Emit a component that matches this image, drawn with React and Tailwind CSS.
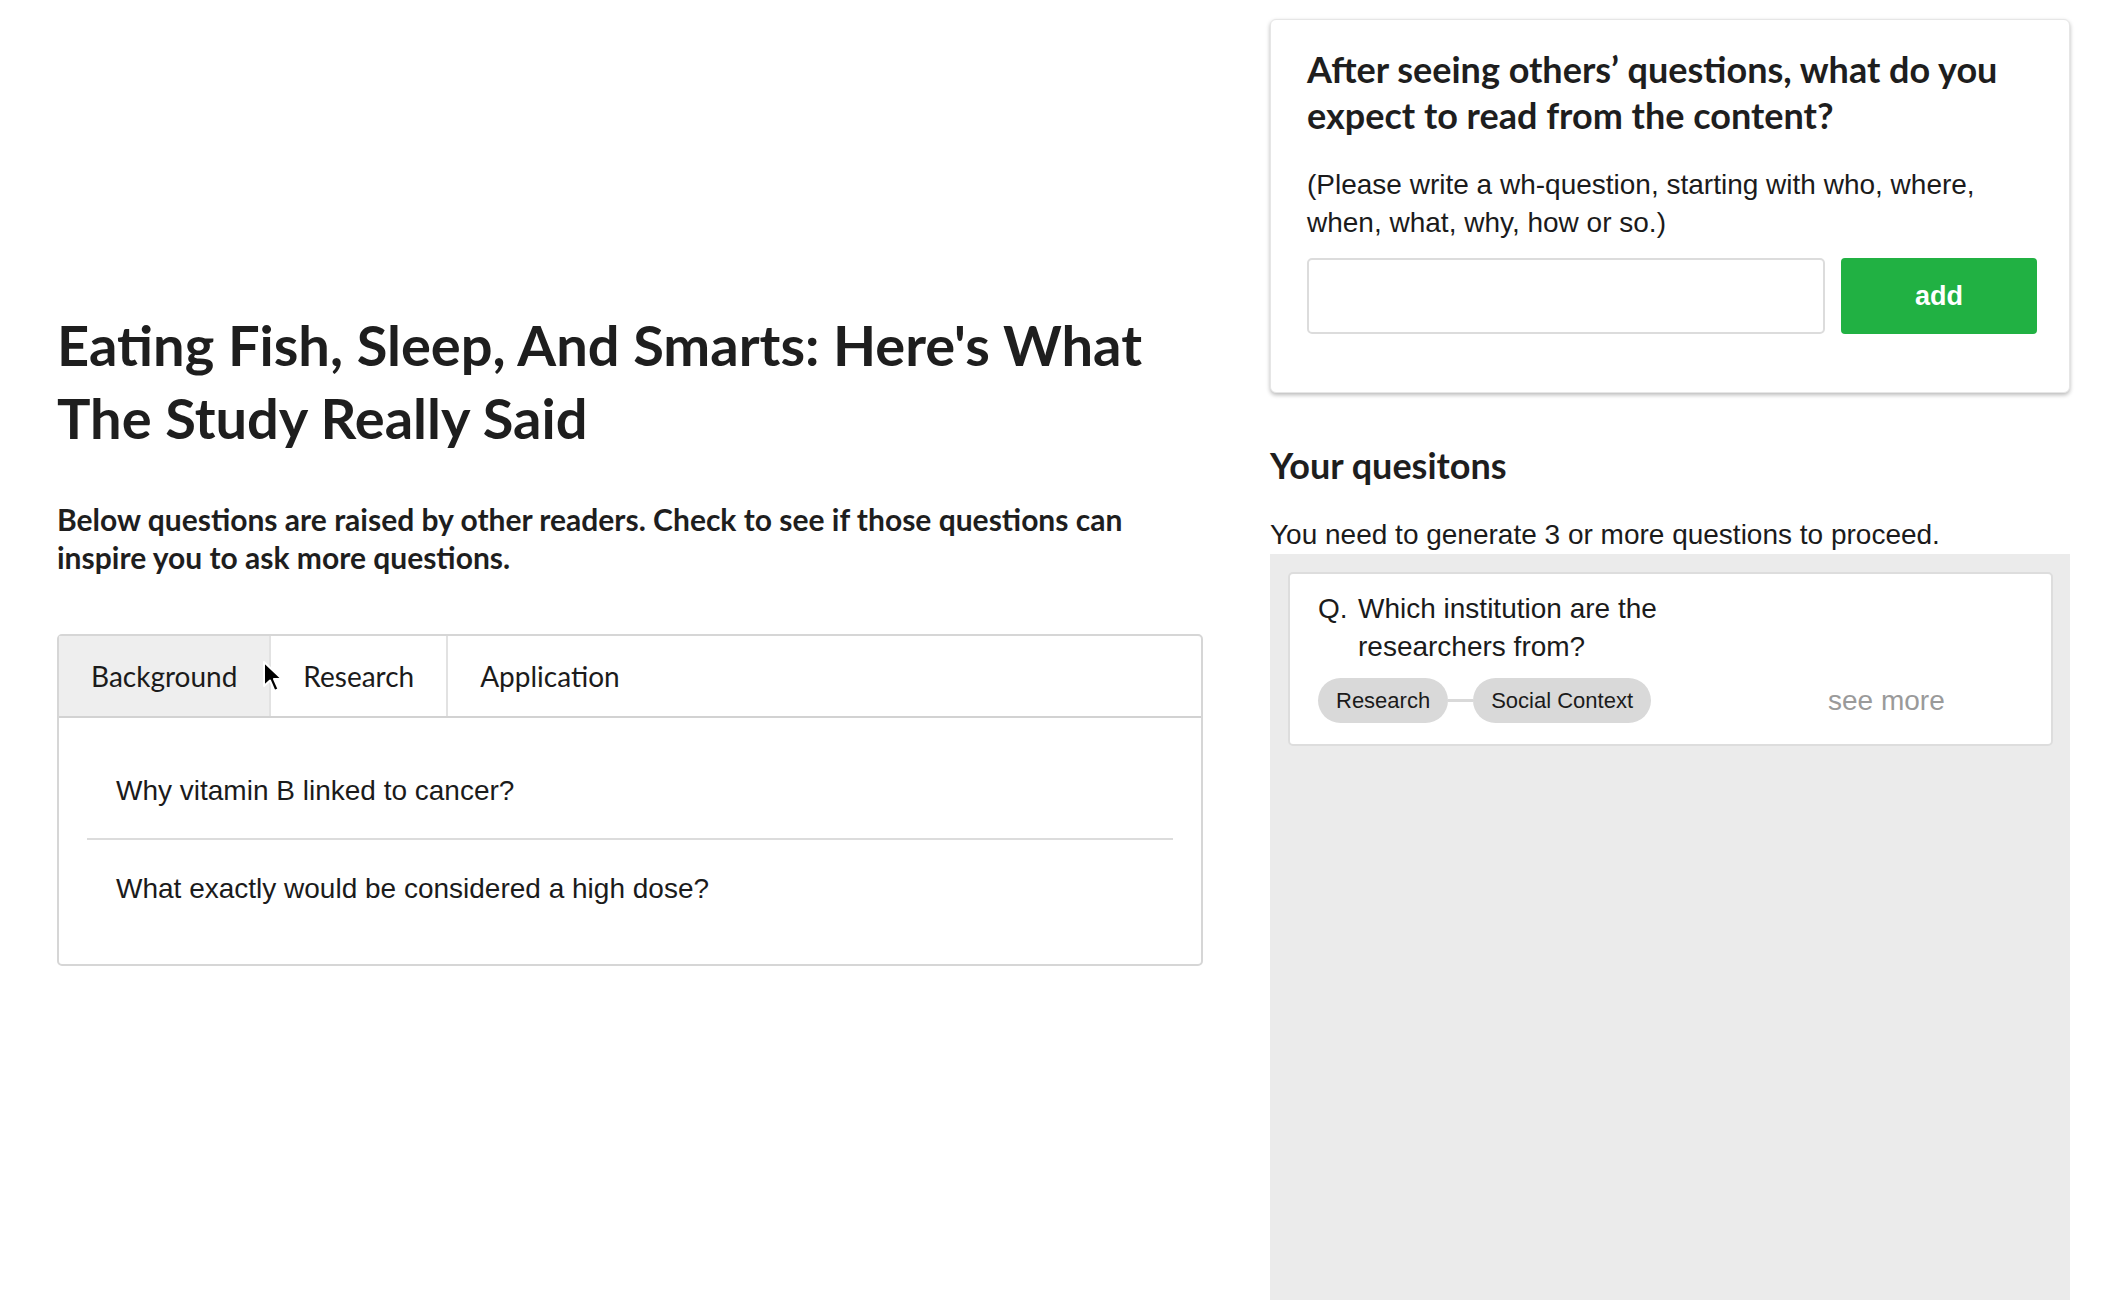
import React, { useState } from "react";

const lato = { fontFamily: "Lato, 'Noto Sans', sans-serif" };

const others = {
  Background: [
    "Why vitamin B linked to cancer?",
    "What exactly would be considered a high dose?",
  ],
  Research: [],
  Application: [],
};

const Cursor = () => (
  <svg
    className="absolute left-[262px] top-[660px] pointer-events-none"
    width="22"
    height="34"
    viewBox="0 0 22 34"
  >
    <path
      d="M2 2 L2 26 L8 20.5 L12.5 31 L16.5 29.2 L12 19 L20 19 Z"
      fill="#000"
      stroke="#fff"
      strokeWidth="2"
      strokeLinejoin="round"
    />
  </svg>
);

export default function App() {
  const [tab, setTab] = useState("Background");
  const [text, setText] = useState("");

  return (
    <div className="relative flex min-h-screen bg-white pl-[57px] text-[#1b1b1b]">
      {/* left column */}
      <div className="w-[1146px] shrink-0 pt-[308px]">
        <h1
          style={lato}
          className="pr-[30px] text-[56px] leading-[73px] font-bold text-[#1e1e1e]"
        >
          Eating Fish, Sleep, And Smarts: Here's What The Study Really Said
        </h1>
        <p
          style={lato}
          className="mt-[46px] pr-[50px] text-[30px] leading-[38px] font-bold text-[#1e1e1e]"
        >
          Below questions are raised by other readers. Check to see if those
          questions can inspire you to ask more questions.
        </p>

        <div className="mt-[58px] rounded-[5px] border-2 border-[#d6d6d6]">
          <div className="flex h-[82px] border-b-2 border-[#d2d2d2]">
            {Object.keys(others).map((name) => (
              <button
                key={name}
                onClick={() => setTab(name)}
                style={lato}
                className={`flex items-center px-[32px] text-[28px] ${
                  tab === name ? "bg-[#eeeeee]" : "bg-white"
                } ${name === "Application" ? "" : "border-r-2 border-[#e2e2e2]"}`}
              >
                {name}
              </button>
            ))}
          </div>
          <div className="px-[28px] pt-[25px] pb-[27px]">
            {others[tab].map((q, i) => (
              <div
                key={q}
                className={`flex h-[97px] items-center pl-[29px] text-[28px] ${
                  i < others[tab].length - 1 ? "border-b-2 border-[#dcdcdc]" : ""
                }`}
                style={{ fontFamily: "'Liberation Sans', Arial, sans-serif" }}
              >
                {q}
              </div>
            ))}
          </div>
        </div>
      </div>

      {/* right column */}
      <div
        className="ml-[67px] flex w-[800px] shrink-0 flex-col pt-[19px]"
        style={{ fontFamily: "'Liberation Sans', Arial, sans-serif" }}
      >
        <div className="rounded-[6px] border border-[#e6e6e6] bg-white pt-[26px] pr-[32px] pb-[58px] pl-[36px] shadow-[0_2px_4px_rgba(0,0,0,0.28)]">
          <h2
            style={lato}
            className="text-[36px] leading-[46px] font-bold text-[#1e1e1e]"
          >
            After seeing others’ questions, what do you expect to read from the
            content?
          </h2>
          <p className="mt-[28px] pr-[40px] text-[28px] leading-[38px]">
            (Please write a wh-question, starting with who, where, when, what,
            why, how or so.)
          </p>
          <div className="mt-[16px] flex gap-[16px]">
            <input
              value={text}
              onChange={(e) => setText(e.target.value)}
              className="h-[76px] w-[518px] rounded-[5px] border-2 border-[#dcdcdc] px-4 text-[28px] outline-none"
            />
            <button className="h-[76px] flex-1 rounded-[4px] bg-[#21b143] text-[27px] font-bold text-white">
              add
            </button>
          </div>
        </div>

        <h2
          style={lato}
          className="mt-[49px] text-[36px] leading-[46px] font-bold text-[#1e1e1e]"
        >
          Your quesitons
        </h2>
        <p className="mt-[28px] text-[28px] leading-[38px]">
          You need to generate 3 or more questions to proceed.
        </p>

        <div className="flex-1 bg-[#ebebeb] pt-[18px] pr-[17px] pb-6 pl-[18px]">
          <div className="rounded-[5px] border-2 border-[#dddddd] bg-white pt-[16px] pr-[30px] pb-[21px] pl-[28px]">
            <div className="flex text-[28px] leading-[38px]">
              <span className="w-[40px] shrink-0">Q.</span>
              <span className="w-[330px]">
                Which institution are the researchers from?
              </span>
            </div>
            <div className="mt-[12px] flex items-center">
              <span className="flex h-[45px] items-center rounded-full bg-[#d9d9d9] px-[18px] text-[22px]">
                Research
              </span>
              <span className="h-[3px] w-[25px] bg-[#d9d9d9]" />
              <span className="flex h-[45px] items-center rounded-full bg-[#d9d9d9] px-[18px] text-[22px]">
                Social Context
              </span>
              <span className="ml-[177px] text-[28px] text-[#9a9a9a]">
                see more
              </span>
            </div>
          </div>
        </div>
      </div>

      <Cursor />
    </div>
  );
}
